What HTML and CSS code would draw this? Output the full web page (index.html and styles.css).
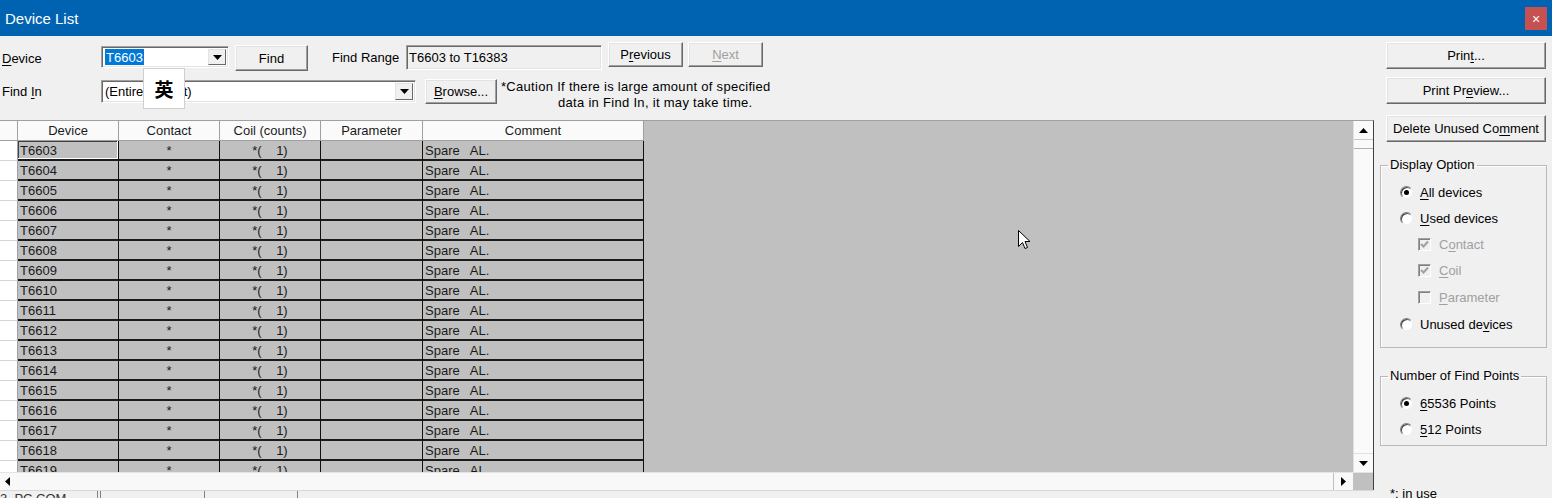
FILE: index.html
```html
<!DOCTYPE html>
<html>
<head>
<meta charset="utf-8">
<title>Device List</title>
<link rel="stylesheet" href="styles.css">
</head>
<body>
<div class="window">
  <div class="titlebar">
    <span class="title">Device List</span>
    <span class="close">&#215;</span>
  </div>
  <div class="body">
    <div class="main">
      <div class="toolbar">
        <div class="row row1">
          <span class="lbl lbl-device"><u>D</u>evice</span>
          <div class="combo sunken combo-device">
            <span class="combo-text"><span class="sel">T6603</span></span>
            <span class="drop"><svg width="9" height="5" viewBox="0 0 9 5"><path d="M0 0H9L4.5 5Z" fill="#000"/></svg></span>
          </div>
          <button class="btn btn-find">Find</button>
          <span class="lbl lbl-range">Find Range</span>
          <div class="sunken rangebox">T6603 to T16383</div>
          <button class="btn btn-prev">P<u>r</u>evious</button>
          <button class="btn btn-next" disabled><u>N</u>ext</button>
        </div>
        <div class="row row2">
          <span class="lbl lbl-findin">Find <u>I</u>n</span>
          <div class="combo sunken combo-findin">
            <span class="combo-text">(Entire Project)</span>
            <span class="drop"><svg width="9" height="5" viewBox="0 0 9 5"><path d="M0 0H9L4.5 5Z" fill="#000"/></svg></span>
          </div>
          <button class="btn btn-browse"><u>B</u>rowse...</button>
          <div class="caution">
            <div>*Caution If there is large amount of specified</div>
            <div class="indent">data in Find In, it may take time.</div>
          </div>
        </div>
      </div>

      <div class="grid">
        <div class="gbody">
          <div class="table-area">
            <div class="gtable">
              <div class="rh hdr"></div><div class="hc">Device</div><div class="hc">Contact</div><div class="hc">Coil (counts)</div><div class="hc">Parameter</div><div class="hc">Comment</div>

              <div class="rh"></div><div class="c dev focus">T6603</div><div class="c ctr">*</div><div class="c ctr pre">*(    1)</div><div class="c"></div><div class="c pre">Spare   AL.</div>
              <div class="rh"></div><div class="c dev">T6604</div><div class="c ctr">*</div><div class="c ctr pre">*(    1)</div><div class="c"></div><div class="c pre">Spare   AL.</div>
              <div class="rh"></div><div class="c dev">T6605</div><div class="c ctr">*</div><div class="c ctr pre">*(    1)</div><div class="c"></div><div class="c pre">Spare   AL.</div>
              <div class="rh"></div><div class="c dev">T6606</div><div class="c ctr">*</div><div class="c ctr pre">*(    1)</div><div class="c"></div><div class="c pre">Spare   AL.</div>
              <div class="rh"></div><div class="c dev">T6607</div><div class="c ctr">*</div><div class="c ctr pre">*(    1)</div><div class="c"></div><div class="c pre">Spare   AL.</div>
              <div class="rh"></div><div class="c dev">T6608</div><div class="c ctr">*</div><div class="c ctr pre">*(    1)</div><div class="c"></div><div class="c pre">Spare   AL.</div>
              <div class="rh"></div><div class="c dev">T6609</div><div class="c ctr">*</div><div class="c ctr pre">*(    1)</div><div class="c"></div><div class="c pre">Spare   AL.</div>
              <div class="rh"></div><div class="c dev">T6610</div><div class="c ctr">*</div><div class="c ctr pre">*(    1)</div><div class="c"></div><div class="c pre">Spare   AL.</div>
              <div class="rh"></div><div class="c dev">T6611</div><div class="c ctr">*</div><div class="c ctr pre">*(    1)</div><div class="c"></div><div class="c pre">Spare   AL.</div>
              <div class="rh"></div><div class="c dev">T6612</div><div class="c ctr">*</div><div class="c ctr pre">*(    1)</div><div class="c"></div><div class="c pre">Spare   AL.</div>
              <div class="rh"></div><div class="c dev">T6613</div><div class="c ctr">*</div><div class="c ctr pre">*(    1)</div><div class="c"></div><div class="c pre">Spare   AL.</div>
              <div class="rh"></div><div class="c dev">T6614</div><div class="c ctr">*</div><div class="c ctr pre">*(    1)</div><div class="c"></div><div class="c pre">Spare   AL.</div>
              <div class="rh"></div><div class="c dev">T6615</div><div class="c ctr">*</div><div class="c ctr pre">*(    1)</div><div class="c"></div><div class="c pre">Spare   AL.</div>
              <div class="rh"></div><div class="c dev">T6616</div><div class="c ctr">*</div><div class="c ctr pre">*(    1)</div><div class="c"></div><div class="c pre">Spare   AL.</div>
              <div class="rh"></div><div class="c dev">T6617</div><div class="c ctr">*</div><div class="c ctr pre">*(    1)</div><div class="c"></div><div class="c pre">Spare   AL.</div>
              <div class="rh"></div><div class="c dev">T6618</div><div class="c ctr">*</div><div class="c ctr pre">*(    1)</div><div class="c"></div><div class="c pre">Spare   AL.</div>
              <div class="rh"></div><div class="c dev">T6619</div><div class="c ctr">*</div><div class="c ctr pre">*(    1)</div><div class="c"></div><div class="c pre">Spare   AL.</div>
            </div>
          </div>
          <div class="vscroll">
            <div class="sbtn up"><svg width="9" height="5" viewBox="0 0 9 5"><path d="M0 5H9L4.5 0Z" fill="#000"/></svg></div>
            <div class="thumb"></div>
            <div class="track"></div>
            <div class="sbtn down"><svg width="9" height="5" viewBox="0 0 9 5"><path d="M0 0H9L4.5 5Z" fill="#000"/></svg></div>
          </div>
        </div>
        <div class="hscroll">
          <div class="hbtn left"><svg width="5" height="9" viewBox="0 0 5 9"><path d="M5 0V9L0 4.5Z" fill="#000"/></svg></div>
          <div class="htrack"></div>
          <div class="hbtn right"><svg width="5" height="9" viewBox="0 0 5 9"><path d="M0 0V9L5 4.5Z" fill="#000"/></svg></div>
          <div class="corner"></div>
        </div>
      </div>

      <div class="status">
        <span class="seg seg1">3  PC COM</span>
        <span class="seg seg2"></span>
        <span class="seg seg3"></span>
        <span class="seg seg4"></span>
      </div>
    </div>

    <div class="side">
      <button class="btn sbtn-wide btn-print">Prin<u>t</u>...</button>
      <button class="btn sbtn-wide btn-preview">Print Pr<u>e</u>view...</button>
      <button class="btn sbtn-wide btn-delete">Delete Unused Co<u>m</u>ment</button>

      <fieldset class="group group-display">
        <legend>Display Option</legend>
        <div class="opt h26"><span class="radio on"></span><span class="otext"><u>A</u>ll devices</span></div>
        <div class="opt h26"><span class="radio"></span><span class="otext"><u>U</u>sed devices</span></div>
        <div class="opt h26 sub"><span class="check"><svg width="9" height="9" viewBox="0 0 9 9"><path d="M1 4L3.5 6.5L8 1.5" stroke="#a0a0a0" stroke-width="2" fill="none"/></svg></span><span class="otext dis">C<u>o</u>ntact</span></div>
        <div class="opt h27 sub"><span class="check"><svg width="9" height="9" viewBox="0 0 9 9"><path d="M1 4L3.5 6.5L8 1.5" stroke="#a0a0a0" stroke-width="2" fill="none"/></svg></span><span class="otext dis"><u>C</u>oil</span></div>
        <div class="opt h27 sub"><span class="check"></span><span class="otext dis"><u>P</u>arameter</span></div>
        <div class="opt h27"><span class="radio"></span><span class="otext">Unused de<u>v</u>ices</span></div>
      </fieldset>

      <fieldset class="group group-points">
        <legend>Number of Find Points</legend>
        <div class="opt h26"><span class="radio on"></span><span class="otext"><u>6</u>5536 Points</span></div>
        <div class="opt h26"><span class="radio"></span><span class="otext"><u>5</u>12 Points</span></div>
      </fieldset>

      <div class="inuse">*: in use</div>
    </div>
  </div>

  <div class="ime">英</div>
  <svg class="cursor" width="13" height="20" viewBox="0 0 13 20"><path d="M0.5 0.5V16.5L4.5 12.5L7 18.5L9.5 17.5L7 11.5H12Z" fill="#fff" stroke="#000" stroke-width="1"/></svg>
</div>
</body>
</html>
```

FILE: styles.css
```css
* { box-sizing: border-box; }
html, body { margin: 0; padding: 0; }
body {
  width: 1552px;
  height: 498px;
  overflow: hidden;
  background: #f0f0f0;
  font-family: "Liberation Sans", Arial, sans-serif;
  font-size: 13px;
  color: #000;
}
u { text-decoration: underline; text-underline-offset: 2px; }

.window { position: relative; display: flex; flex-direction: column; height: 498px; }

/* Title bar */
.titlebar {
  flex: none;
  height: 36px;
  background: #0063b1;
  color: #fff;
  display: flex;
  align-items: center;
  justify-content: space-between;
  padding: 0 5px 0 5px;
}
.title { font-size: 15px; }
.close {
  width: 22px;
  height: 23px;
  background: #c75050;
  color: #fff;
  font-size: 14px;
  display: flex;
  align-items: center;
  justify-content: center;
  margin-top: 1px;
}

.body { flex: 1; display: flex; min-height: 0; }
.main { width: 1374px; flex: none; display: flex; flex-direction: column; }

/* Toolbar */
.toolbar { height: 84px; flex: none; }
.row { display: flex; align-items: flex-start; }
.row1 { height: 36px; padding-top: 6px; }
.row2 { height: 48px; }

.lbl { line-height: 16px; white-space: nowrap; }
.lbl-device { margin: 9px 0 0 2px; width: 99px; }
.lbl-findin { margin: 12px 0 0 2px; width: 99px; }
.lbl-range { margin: 8px 0 0 24px; width: 74px; }

.sunken {
  background: #fff;
  border: 1px solid;
  border-color: #a0a0a0 #ffffff #ffffff #a0a0a0;
  box-shadow: inset 1px 1px 0 #696969, inset -1px -1px 0 #e3e3e3;
}
.combo { display: flex; align-items: stretch; padding: 2px; }
.combo-device { width: 128px; height: 22px; margin-top: 4px; }
.combo-findin { width: 315px; height: 23px; margin-top: 8px; }
.combo-text { flex: 1; line-height: 17px; padding-left: 1px; white-space: nowrap; overflow: hidden; }
.sel { background: #0078d7; color: #fff; display: inline-block; padding: 0 1px; line-height: 17px; }
.drop {
  width: 18px;
  flex: none;
  background: #f0f0f0;
  border: 1px solid;
  border-color: #e3e3e3 #696969 #696969 #e3e3e3;
  display: flex;
  align-items: center;
  justify-content: center;
}

.btn {
  font: inherit;
  font-size: 13px;
  color: #000;
  background: #f0f0f0;
  border: 1px solid;
  border-color: #ffffff #696969 #696969 #ffffff;
  box-shadow: inset -1px -1px 0 #a0a0a0, inset 1px 1px 0 #e3e3e3;
  padding: 0;
  flex: none;
  white-space: nowrap;
}
.btn[disabled] { color: #a0a0a0; }
.btn-find { width: 73px; height: 26px; margin: 3px 0 0 6px; }
.rangebox {
  width: 196px;
  height: 25px;
  margin-top: 3px;
  background: #f0f0f0;
  line-height: 24px;
  padding-left: 2px;
  white-space: nowrap;
}
.btn-prev { width: 75px; height: 25px; margin-left: 6px; }
.btn-next { width: 75px; height: 25px; margin-left: 5px; }
.btn-browse { width: 72px; height: 25px; margin: 7px 0 0 9px; }

.caution { margin: 7px 0 0 4px; line-height: 16px; white-space: nowrap; letter-spacing: 0.3px; }
.caution .indent { padding-left: 57px; }

/* Grid */
.grid {
  height: 370px;
  flex: none;
  border-top: 1px solid #a0a0a0;
  border-right: 1px solid #404040;
  display: flex;
  flex-direction: column;
}
.gbody { height: 351px; display: flex; flex: none; }
.table-area { width: 1353px; flex: none; background: #c0c0c0; overflow: hidden; }
.gtable {
  display: grid;
  grid-template-columns: 18px 101px 101px 101px 102px 221px;
  grid-auto-rows: 20px;
  width: 644px;
}
.hc {
  background: #fafafa;
  border-right: 1px solid #a0a0a0;
  border-bottom: 1px solid #a0a0a0;
  text-align: center;
  line-height: 19px;
  white-space: nowrap;
  color: #1a1a1a;
}
.rh {
  background: #ffffff;
  border-right: 1px solid #a0a0a0;
  border-bottom: 1px solid #d4d4d4;
}
.rh.hdr { background: #fafafa; border-bottom-color: #a0a0a0; }
.c {
  background: #c0c0c0;
  border-right: 1px solid #111;
  border-bottom: 2px solid #1a1a1a;
  line-height: 19px;
  padding-left: 2px;
  white-space: nowrap;
  overflow: hidden;
  color: #1a1a1a;
}
.ctr { text-align: center; padding-left: 0; }
.pre { white-space: pre; }
.focus { box-shadow: inset -1px -1px 0 #ffffff, inset 1px 1px 0 #404040; }

.vscroll {
  width: 20px;
  flex: none;
  background: #fafafa;
  display: flex;
  flex-direction: column;
  border-left: 1px solid #e0e0e0;
}
.sbtn {
  height: 19px;
  flex: none;
  display: flex;
  align-items: center;
  justify-content: center;
  background: #fafafa;
}
.sbtn.up { border-bottom: 1px solid #c8c8c8; }
.thumb { height: 9px; flex: none; background: #fafafa; border-bottom: 1px solid #b0b0b0; }
.track { flex: 1; background: #fafafa; }
.sbtn.down { border-top: 1px solid #e0e0e0; }

.hscroll { height: 18px; flex: none; display: flex; background: #f8f8f8; border-top: 1px solid #e4e4e4; }
.hbtn { width: 15px; flex: none; display: flex; align-items: center; justify-content: center; }
.htrack { flex: 1; border-right: 1px solid #c0c0c0; }
.hbtn.right { width: 19px; }
.corner { width: 20px; flex: none; background: #c0c0c0; }

/* Status */
.status { flex: 1; display: flex; overflow: hidden; line-height: 13px; border-top: 1px solid #d8d8d8; }
.seg { flex: none; white-space: pre; padding-top: 1px; color: #333; }
.seg1 { width: 97px; }
.seg2 { width: 107px; border-left: 1px solid #808080; box-shadow: inset 2px 0 0 #f0f0f0, inset 3px 0 0 #808080; }
.seg3 { width: 93px; border-left: 1px solid #808080; }
.seg4 { flex: 1; border-left: 1px solid #808080; }

/* Side panel */
.side { flex: 1; padding: 6px 0 0 6px; display: flex; flex-direction: column; align-items: flex-start; }
.sbtn-wide { width: 160px; height: 27px; margin-left: 6px; }
.btn-preview { margin-top: 8px; }
.btn-delete { margin-top: 11px; }

.group {
  width: 167px;
  margin: 0;
  padding: 0 0 0 19px;
  border: 1px solid #b9b9b9;
  box-shadow: 1px 1px 0 #ffffff inset;
}
.group legend { margin-left: -12px; padding: 0 2px; line-height: 16px; white-space: nowrap; }
.group-display { margin-top: 15px; padding-top: 6px; padding-bottom: 9px; }
.group-points { margin-top: 20px; padding-top: 6px; padding-bottom: 3px; }

.opt { display: flex; align-items: center; white-space: nowrap; }
.h26 { height: 26px; }
.h27 { height: 27px; }
.opt.sub { padding-left: 18px; }
.otext { margin-left: 7px; }
.otext.dis { color: #a0a0a0; margin-left: 8px; }

.radio {
  width: 13px;
  height: 13px;
  flex: none;
  border-radius: 50%;
  background: #fff;
  border: 1px solid;
  border-color: #808080 #f0f0f0 #f0f0f0 #808080;
  box-shadow: inset 1px 1px 0 #404040;
  position: relative;
}
.radio.on::after {
  content: "";
  position: absolute;
  left: 3px;
  top: 3px;
  width: 5px;
  height: 5px;
  border-radius: 50%;
  background: #000;
}
.check {
  width: 13px;
  height: 13px;
  flex: none;
  background: #f0f0f0;
  border: 1px solid;
  border-color: #a0a0a0 #ffffff #ffffff #a0a0a0;
  box-shadow: inset 1px 1px 0 #808080;
  display: flex;
  align-items: center;
  justify-content: center;
}

.inuse { margin: 40px 0 0 10px; line-height: 16px; white-space: nowrap; }

/* Overlays */
.ime {
  position: absolute;
  left: 143px;
  top: 68px;
  width: 42px;
  height: 41px;
  background: #fff;
  border: 1px solid #cfcfcf;
  display: flex;
  align-items: center;
  justify-content: center;
  font-family: "Noto Sans CJK SC", "Noto Sans CJK JP", sans-serif;
  font-weight: bold;
  font-size: 19px;
  color: #000;
}
.cursor { position: absolute; left: 1018px; top: 230px; }
```
